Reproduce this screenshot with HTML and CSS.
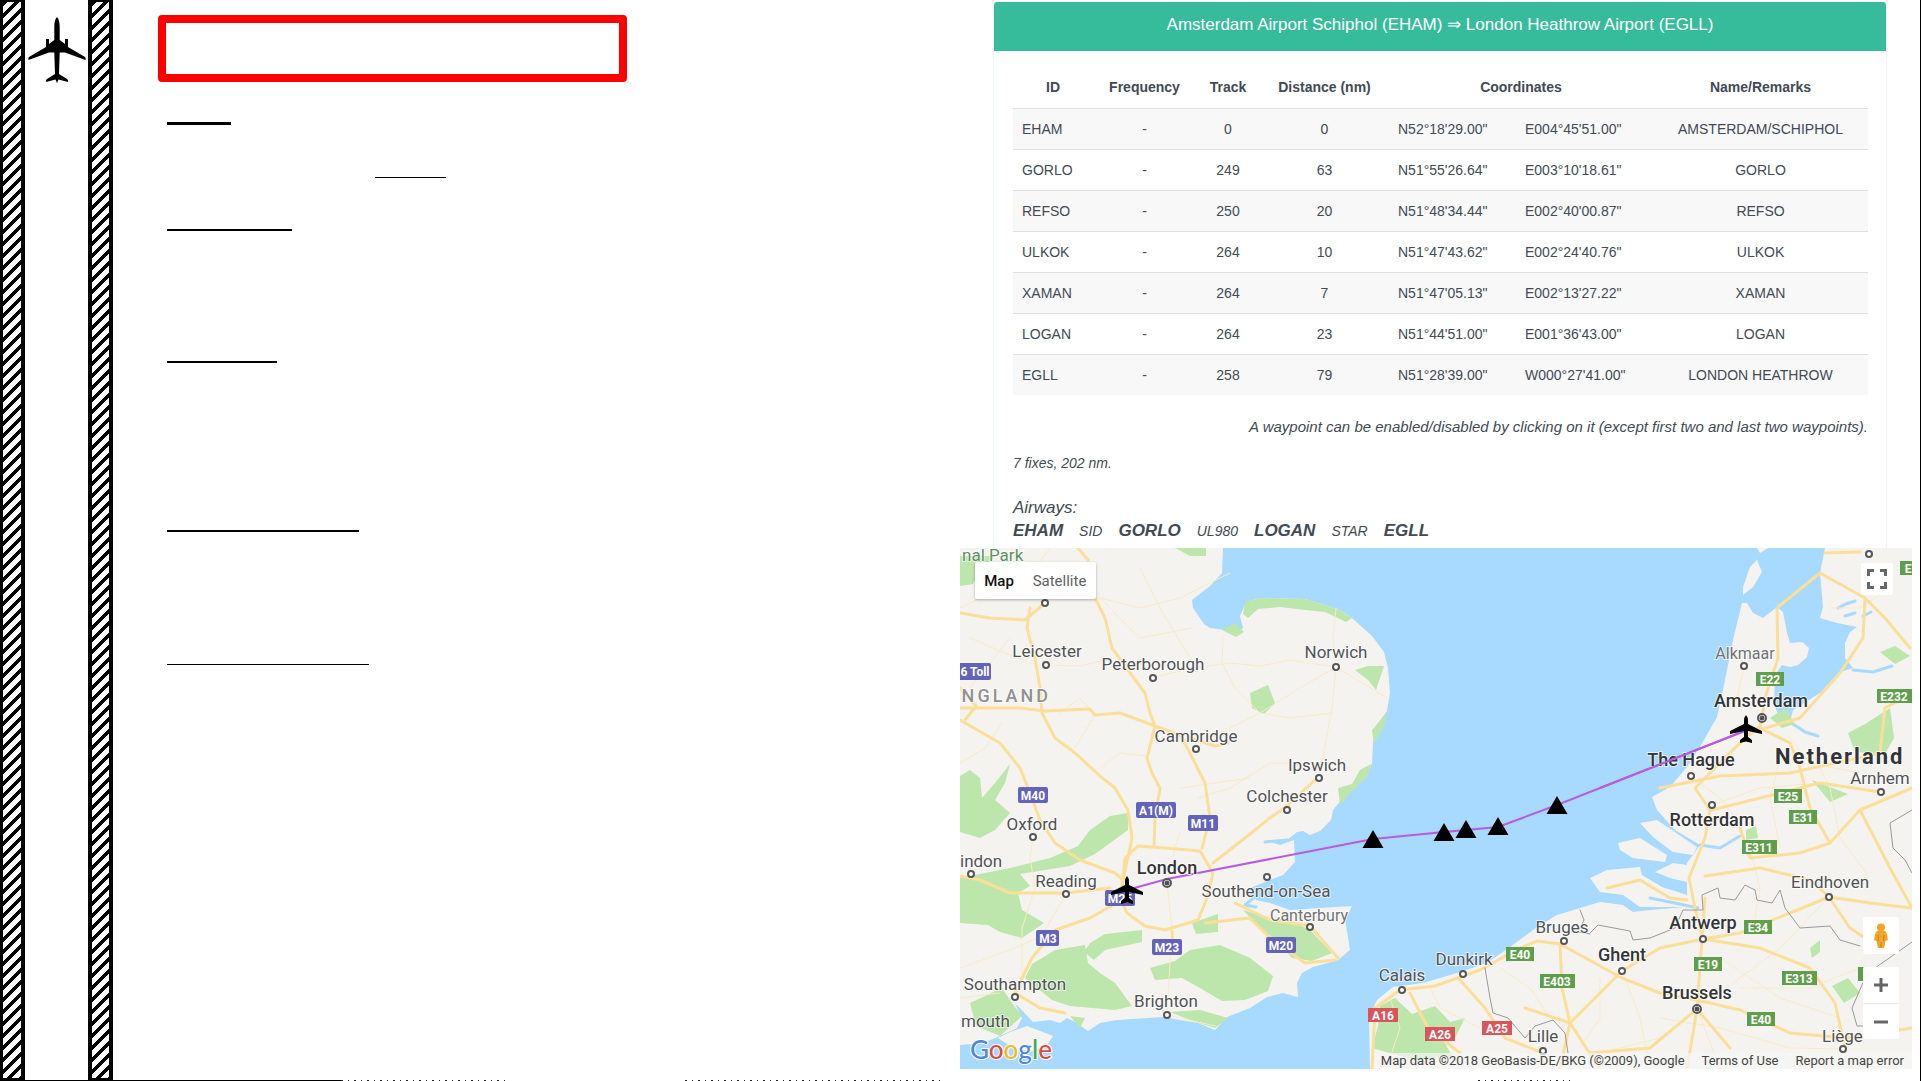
FILE: index.html
```html
<!DOCTYPE html>
<html lang="en">
<head>
<meta charset="utf-8">
<title>Amsterdam Airport Schiphol (EHAM) ⇒ London Heathrow Airport (EGLL)</title>
<link rel="stylesheet" href="styles.css">
</head>
<body>
<main class="page">
  <section class="plan">
    <div class="strip"></div>
    <div class="runway">
      <svg class="jet" viewBox="0 0 58 66" aria-hidden="true"><path d="M29 0C27 2 26.300 6 26.300 10V23L21 27V22H18V30L1 40Q0 41 .5 43L21 35.500H26.300L27 57L19 62Q17.500 63 18 65L27.500 62.500L29 66L30.500 62.500L40 65Q40.500 63 39 62L31 57L31.700 35.500H37L57.500 43Q58 41 57 40L40 30V22H37V27L31.700 23V10C31.700 6 31 2 29 0Z"/></svg>
    </div>
    <div class="strip strip-right"></div>
    <div class="notes">
      <div class="title-box"></div>
      <div class="rule rule-intro"></div>
      <div class="rule rule-inset"></div>
      <div class="rule rule-second"></div>
      <div class="rule rule-third"></div>
      <div class="rule rule-fourth"></div>
      <div class="rule rule-fifth"></div>
    </div>
  </section>

  <section class="route">
    <article class="card">
      <h1 class="card-title">Amsterdam Airport Schiphol (EHAM) ⇒ London Heathrow Airport (EGLL)</h1>
      <div class="card-body">
        <table class="fixes">
          <colgroup><col class="c-id"><col class="c-freq"><col class="c-track"><col class="c-dist"><col class="c-lat"><col class="c-lon"><col class="c-name"></colgroup>
          <thead><tr><th>ID</th><th>Frequency</th><th>Track</th><th>Distance (nm)</th><th colspan="2">Coordinates</th><th>Name/Remarks</th></tr></thead>
          <tbody>
            <tr><td class="left">EHAM</td><td>-</td><td>0</td><td>0</td><td class="left">N52°18'29.00"</td><td class="left">E004°45'51.00"</td><td>AMSTERDAM/SCHIPHOL</td></tr>
            <tr><td class="left">GORLO</td><td>-</td><td>249</td><td>63</td><td class="left">N51°55'26.64"</td><td class="left">E003°10'18.61"</td><td>GORLO</td></tr>
            <tr><td class="left">REFSO</td><td>-</td><td>250</td><td>20</td><td class="left">N51°48'34.44"</td><td class="left">E002°40'00.87"</td><td>REFSO</td></tr>
            <tr><td class="left">ULKOK</td><td>-</td><td>264</td><td>10</td><td class="left">N51°47'43.62"</td><td class="left">E002°24'40.76"</td><td>ULKOK</td></tr>
            <tr><td class="left">XAMAN</td><td>-</td><td>264</td><td>7</td><td class="left">N51°47'05.13"</td><td class="left">E002°13'27.22"</td><td>XAMAN</td></tr>
            <tr><td class="left">LOGAN</td><td>-</td><td>264</td><td>23</td><td class="left">N51°44'51.00"</td><td class="left">E001°36'43.00"</td><td>LOGAN</td></tr>
            <tr><td class="left">EGLL</td><td>-</td><td>258</td><td>79</td><td class="left">N51°28'39.00"</td><td class="left">W000°27'41.00"</td><td>LONDON HEATHROW</td></tr>
          </tbody>
        </table>
        <p class="hint">A waypoint can be enabled/disabled by clicking on it (except first two and last two waypoints).</p>
        <p class="summary">7 fixes, 202 nm.</p>
        <p class="airways-label">Airways:</p>
        <p class="airways"><b>EHAM</b><span>SID</span><b>GORLO</b><span>UL980</span><b>LOGAN</b><span>STAR</span><b>EGLL</b></p>
      </div>
    </article>

    <div class="map">
      <svg class="map-canvas" viewBox="0 0 952 521" role="img" aria-label="Route map">
        <defs>
          <path id="plane" d="M0-14Q-2-12-2-8V-5L-16 2V5L-2 2V8L-6 11V14L0 12.500L6 14V11L2 8V2L16 5V2L2-5V-8Q2-12 0-14Z"/>
          <path id="fix" d="M0-9L10.500 9H-10.500Z"/>
          <circle id="town" r="3"/>
          <g id="capital"><circle r="4"/><circle r="1.500" class="core"/></g>
        </defs>
        <rect class="sea" width="952" height="521"/>
        <g class="land">
          <path d="M0 0H263L262 25L250 38L232 52L233 60L244 76L250 80L265 82L275 88L283 80L280 68L286 54L300 50L345 51L365 57L380 62L392 70L412 88L424 104L428 120L430 145L427 163L415 180L413 195L412 215L408 225L395 235L383 250L373 262L371 272L360 283L350 287L343 283L337 284L327 292L310 294L320 297L334 292L335 314L323 327L310 332L290 340L296 352L310 355L330 362L360 360L392 358L385 372L388 389L390 402L378 412L353 419L342 425L337 435L338 449L323 445L307 449L290 460L267 469L255 482L238 475L203 469L157 472L140 475L128 483L117 475L107 470L100 475L90 472L73 474L55 455L62 470L57 480L40 488L23 495L0 497Z"/>
          <path d="M38 490L50 484L67 478L80 483L93 488L87 497L70 504L50 498Z"/>
          <path d="M410 521L409 469L417 452L433 439L463 435L497 425L527 415L550 399L577 379L597 367L620 360L640 354L663 357L673 364L690 362L713 360L723 359L727 347L727 315L733 307L740 297L715 282L697 262L692 249L710 239L727 219L740 199L757 169L763 142L773 92L782 55L787 55L793 65L803 70L817 59L823 64L827 85L830 95L842 94L849 100L847 109L838 117L830 119L822 117L815 127L814 155L820 172L830 174L833 162L860 145L880 124L893 120L885 110L885 95L890 84L897 79L877 75L860 70L863 59L860 25L865 0H952V521Z"/>
          <path d="M797 12L802 24L793 39L783 47L783 39L790 19ZM797 0H808L800 5Z"/>
          <path d="M630 330L647 322L680 319L682 327L702 339L727 347V359H680L663 347L640 344ZM658 295L680 290L707 307L705 314L673 310L660 302ZM680 275L697 272L737 299L733 307L713 304L693 289ZM695 324L713 315L727 317V334L710 330Z"/>
        </g>
        <g class="water">
          <path d="M893 122L913 124L932 118M878 60L886 56L895 53M885 68L895 65M903 68L911 64"/>
          <path d="M740 297L760 300L780 288M830 174L845 184L858 188"/>
          <path d="M690 350L715 355L738 360"/>
          <path d="M300 345L285 357L296 359M290 348L305 340M305 294L327 292"/>
        </g>
        <g class="green">
          <path d="M0 8L35 8L20 22L13 36L0 38ZM215 0H246V8L230 8Z"/>
          <path d="M0 228L10 222L20 230L22 250L35 235L50 216L45 235L35 252L50 265L35 282L20 290L0 284Z"/>
          <path d="M0 330L50 320L90 310L118 298L130 282L150 268L168 265L168 282L150 295L135 306L110 318L60 326L70 338L58 345L62 362L84 375L62 390L40 384L28 377L0 375Z"/>
          <path d="M65 430L72 416L95 402L125 397L128 415L140 425L155 435L172 458L155 462L110 458L92 452ZM130 395L145 386L182 382L182 394L145 402L134 412L124 404Z"/>
          <path d="M190 420L215 413L230 402L260 397L290 410L313 428L308 443L285 452L262 453L240 440L222 430L195 432ZM232 375L258 366L258 384L236 386ZM210 464L240 462L268 470L255 480L235 474Z"/>
          <path d="M283 362L310 370L330 372L350 382L372 405L352 413L332 410L318 394L300 380ZM10 455L42 440L52 455L62 468L40 488L16 478ZM110 468L125 470L120 480Z"/>
          <path d="M283 66L285 54L300 50L345 51L365 57L380 62L392 70L386 74L365 64L345 62L320 59L298 61L288 70ZM262 82L275 75L284 84L276 89ZM412 182L427 164L424 178L414 196ZM378 240L392 236L400 222L411 216L408 228L390 245L380 257ZM290 145L308 137L315 155L304 166L292 160ZM408 118L424 118L416 142L408 132L395 122Z"/>
          <path d="M418 478L420 458L435 450L452 466L475 458L490 474L505 470L495 490L480 486L492 508L455 512L412 500Z"/>
          <path d="M888 185L905 176L930 160L934 190L925 206L895 204ZM920 104L935 98L950 108L935 116ZM852 232L888 246L870 254ZM850 400L860 392L860 404L852 410ZM786 282L796 278L798 290L786 292ZM872 438L888 430L900 445L884 455ZM810 170L825 160L835 176L822 180Z"/>
        </g>
        <g class="lane">
          <path d="M0 60L40 40L75 20L90 0M85 117L120 118L155 110M80 118L45 105L10 90M193 130L230 120L270 115L300 118L330 112L376 119L427 150M376 119L373 90L376 60M376 119L340 140L300 165L250 190L236 201M376 119L372 160L359 230M263 90L262 115L275 140L300 165L330 170L372 165M270 25L220 50L180 60L140 50M140 50L180 90L232 80M100 165L120 150L135 167L115 200M0 215L25 200L42 175M73 289L70 310L75 340L62 380L62 430M140 220L160 205L185 208M106 346L85 382M207 335L215 300L220 285M207 335L212 380L207 467M207 467L255 478M238 250L270 240L310 215L359 215M0 420L55 400L100 380M0 450L40 445M180 20L200 60L230 110M10 140L50 90M220 240L255 235L290 230"/>
          <path d="M540 420L570 440L590 470M430 450L440 480L430 510M470 440L480 460L520 480M640 430L640 470L620 500M662 423L680 470L690 521M700 470L760 480L830 500L883 501M737 461L780 430L820 400L869 349M737 461L760 520M780 440L850 440L900 420M640 505L700 490L737 461M752 257L800 240L860 235M731 228L760 250L780 275M784 118L775 160M850 200L870 240L880 290M880 290L910 330M790 300L800 340L795 370M870 60L900 60L930 40M830 190L850 215L900 225M760 410L820 450L880 470M820 210L810 250L820 300"/>
        </g>
        <g class="road">
          <path d="M70 60L67 80L75 110L80 140L82 165L95 190L115 205L140 228L155 240L168 262L172 290L163 332M0 172L40 195L60 220L72 250L80 272L95 295L120 312L155 325L163 332M135 50L145 70L152 100L170 125L185 145L190 165L195 178L220 187L230 205L245 235L250 270L242 300M195 178L187 210L192 225L200 240L195 270L194 300M0 160L60 160L85 163L130 161L135 167L160 165L195 178M0 65L30 70L65 72L85 55M163 332L165 310L178 298L205 300L240 303L253 325L247 350L238 372L205 382L185 378L167 365L160 350L163 332M0 328L20 332L50 345L106 345L150 340M165 350L130 370L95 382L72 410L62 430L55 445L80 460L105 465M245 375L290 370L310 390L345 415L375 412M275 355L310 372L350 378L378 410M253 315L285 290L310 270L327 258L355 232M212 382L213 405M230 190L255 198L268 195M118 0L128 12M5 172L16 158L0 140"/>
          <path d="M412 521L415 460L440 442L475 438L520 422L560 400L577 393L600 396L640 418L662 430L700 445L737 452L780 462L830 485L885 490L952 480M450 445L468 480L500 505M500 432L525 460L545 490L583 505M565 460L610 475L600 521M600 395L602 440L610 475L640 445L662 423L700 400L743 391M610 475L640 521M743 391L735 360L729 330L745 290L750 262L735 240L760 215L785 190L800 178M743 391L800 400L850 420L875 455L885 500M743 391L780 385L830 365L869 349L910 355L952 360M745 350L742 391L737 461L727 521M737 461L770 500M737 461L690 500L630 505M745 328L800 320L850 332L869 349M780 280L790 310L840 305L870 295L900 262L952 240M817 60L818 110L805 150L800 180M817 60L860 25L905 50L903 90L880 125L840 170L805 180M905 50L925 70L950 100M700 240L760 228L830 225L920 205L925 160L952 145M900 262L930 320L952 360M800 180L830 195L840 220L850 260L870 295M869 349L890 380L920 400M647 340L680 332L710 350L727 352M865 5L900 4M752 262L800 250L860 235L921 244"/>
        </g>
        <g class="border">
          <path d="M525 420L530 450L533 465L548 470L565 490L575 478L593 472L605 485L608 505M630 385L638 377L670 383L673 392L690 390L715 380L723 362L743 362L742 347L758 340L760 350L775 352L785 337L795 342L797 352L812 355L820 342L825 360L840 380L870 378L880 392L900 398M952 262L930 275L933 300L945 312L952 325M952 394L915 420L905 430L892 460L897 478H904M620 362L624 372L618 384L630 386"/>
        </g>

        <path class="track" d="M167 342L207 331L413 291L484 284L506 282L538 279L597 257L787 182"/>

        <g class="towns">
          <use href="#town" x="85" y="55"/><use href="#town" x="86" y="117"/><use href="#town" x="193" y="130"/><use href="#town" x="236" y="201"/><use href="#town" x="376" y="119"/><use href="#town" x="359" y="230"/><use href="#town" x="327" y="262"/><use href="#town" x="73" y="289"/><use href="#town" x="11" y="326"/><use href="#town" x="106" y="346"/><use href="#town" x="307" y="329"/><use href="#town" x="350" y="379"/><use href="#town" x="55" y="449"/><use href="#town" x="207" y="467"/><use href="#town" x="442" y="442"/><use href="#town" x="503" y="426"/><use href="#town" x="604" y="393"/><use href="#town" x="583" y="503"/><use href="#town" x="784" y="118"/><use href="#town" x="909" y="6"/><use href="#town" x="731" y="228"/><use href="#town" x="921" y="244"/><use href="#town" x="752" y="257"/><use href="#town" x="869" y="349"/><use href="#town" x="743" y="391"/><use href="#town" x="662" y="423"/><use href="#town" x="883" y="501"/>
          <use href="#capital" x="207" y="335"/><use href="#capital" x="802" y="170"/><use href="#capital" x="737" y="461"/>
        </g>

        <g class="shield motorway">
          <rect x="-9" y="115" width="40" height="17" rx="2"/><text x="15" y="128">6 Toll</text>
          <rect x="58" y="239" width="30" height="16" rx="2"/><text x="73" y="252">M40</text>
          <rect x="176" y="254" width="40" height="16" rx="2"/><text x="196" y="267">A1(M)</text>
          <rect x="228" y="267" width="30" height="16" rx="2"/><text x="243" y="280">M11</text>
          <rect x="145" y="342" width="30" height="16" rx="2"/><text x="160" y="355">M25</text>
          <rect x="76" y="382" width="23" height="16" rx="2"/><text x="88" y="395">M3</text>
          <rect x="192" y="391" width="30" height="16" rx="2"/><text x="207" y="404">M23</text>
          <rect x="306" y="389" width="30" height="16" rx="2"/><text x="321" y="402">M20</text>
        </g>
        <g class="shield euro">
          <rect x="546" y="399" width="28" height="14"/><text x="560" y="411">E40</text>
          <rect x="580" y="426" width="35" height="14"/><text x="597" y="438">E403</text>
          <rect x="796" y="124" width="28" height="14"/><text x="810" y="136">E22</text>
          <rect x="917" y="141" width="35" height="14"/><text x="934" y="153">E232</text>
          <rect x="940" y="13" width="28" height="14"/><text x="948" y="25">E</text>
          <rect x="814" y="241" width="28" height="14"/><text x="828" y="253">E25</text>
          <rect x="829" y="262" width="28" height="14"/><text x="843" y="274">E31</text>
          <rect x="782" y="292" width="35" height="14"/><text x="799" y="304">E311</text>
          <rect x="784" y="372" width="28" height="14"/><text x="798" y="384">E34</text>
          <rect x="734" y="409" width="28" height="14"/><text x="748" y="421">E19</text>
          <rect x="822" y="423" width="35" height="14"/><text x="839" y="435">E313</text>
          <rect x="787" y="464" width="28" height="14"/><text x="801" y="476">E40</text>
          <rect x="898" y="419" width="10" height="14"/>
        </g>
        <g class="shield auto">
          <rect x="408" y="460" width="30" height="14"/><text x="423" y="472">A16</text>
          <rect x="465" y="479" width="30" height="14"/><text x="480" y="491">A26</text>
          <rect x="522" y="473" width="30" height="14"/><text x="537" y="485">A25</text>
        </g>

        <g class="label">
          <text class="park" x="2" y="13">nal Park</text>
          <text class="region" x="91" y="154">NGLAND</text>
          <text x="87" y="109">Leicester</text>
          <text x="193" y="122">Peterborough</text>
          <text x="236" y="194">Cambridge</text>
          <text x="376" y="110">Norwich</text>
          <text x="357" y="223">Ipswich</text>
          <text x="327" y="254">Colchester</text>
          <text x="72" y="282">Oxford</text>
          <text class="from" x="0" y="319">indon</text>
          <text x="106" y="339">Reading</text>
          <text x="306" y="349">Southend-on-Sea</text>
          <text class="small" x="349" y="373">Canterbury</text>
          <text x="55" y="442">Southampton</text>
          <text class="from" x="1" y="479">mouth</text>
          <text x="206" y="459">Brighton</text>
          <text x="442" y="433">Calais</text>
          <text x="504" y="417">Dunkirk</text>
          <text x="602" y="385">Bruges</text>
          <text x="583" y="494">Lille</text>
          <text class="small" x="785" y="111">Alkmaar</text>
          <text x="920" y="236">Arnhem</text>
          <text x="870" y="340">Eindhoven</text>
          <text class="from" x="862" y="494">Liège</text>
          <text class="major" x="207" y="326">London</text>
          <text class="major" x="801" y="159">Amsterdam</text>
          <text class="major" x="731" y="218">The Hague</text>
          <text class="major" x="752" y="278">Rotterdam</text>
          <text class="major" x="743" y="381">Antwerp</text>
          <text class="major" x="662" y="413">Ghent</text>
          <text class="major" x="737" y="451">Brussels</text>
          <text class="country" x="815" y="216">Netherland</text>
        </g>

        <path class="track" d="M640 240L787 182"/>
        <g class="markers">
          <use href="#plane" x="167" y="342"/><use href="#plane" x="786" y="181"/>
          <use href="#fix" x="413" y="291"/><use href="#fix" x="484" y="284"/><use href="#fix" x="506" y="281"/><use href="#fix" x="538" y="278"/><use href="#fix" x="597" y="257"/>
        </g>
        <text class="logo" x="10" y="511"><tspan class="blue">G</tspan><tspan class="red">o</tspan><tspan class="yellow">o</tspan><tspan class="blue">g</tspan><tspan class="lime">l</tspan><tspan class="red">e</tspan></text>
      </svg>

      <div class="map-type">
        <button type="button" class="active">Map</button>
        <button type="button">Satellite</button>
      </div>
      <button type="button" class="control fullscreen" aria-label="Toggle fullscreen">
        <svg viewBox="0 0 20 20" width="20" height="20"><path d="M1.500 7V1.500H7M13 1.500H18.500V7M18.500 13V18.500H13M7 18.500H1.500V13"/></svg>
      </button>
      <div class="map-tools">
        <button type="button" class="control pegman" aria-label="Street View">
          <svg viewBox="0 0 16 26" width="16" height="26"><circle cx="8" cy="4.500" r="4"/><path d="M4 8H12Q14 9 15 17L12.500 18L11 25H5L3.500 18L1 17Q2 9 4 8Z"/><path class="fold" d="M5 12L5.500 18M11 12L10.500 18M8 19V24"/></svg>
        </button>
        <div class="zoom">
          <button type="button" class="control" aria-label="Zoom in"><svg viewBox="0 0 14 14" width="14" height="14"><path d="M7 0V14M0 7H14"/></svg></button>
          <button type="button" class="control" aria-label="Zoom out"><svg viewBox="0 0 14 14" width="14" height="14"><path d="M0 7H14"/></svg></button>
        </div>
      </div>
      <div class="credits">
        <span>Map data ©2018 GeoBasis-DE/BKG (©2009), Google</span>
        <a href="#terms">Terms of Use</a>
        <a href="#report">Report a map error</a>
      </div>
    </div>
  </section>
</main>
<div class="page-edge"><i class="edge-line"></i><i class="ticks ticks-a"></i><i class="ticks ticks-b"></i><i class="ticks ticks-c"></i></div>
</body>
</html>
```
FILE: styles.css
```css
* { box-sizing: border-box; }

body {
  margin: 0;
  min-height: 100vh;
  display: flex;
  flex-direction: column;
  background: #fff;
  color: #434a54;
  font-family: "Liberation Sans", Arial, sans-serif;
  font-size: 14px;
  border-right: 1px solid #000;
}

h1, p { margin: 0; font-weight: normal; }
button { margin: 0; padding: 0; border: 0; background: #fff; font: inherit; cursor: pointer; }

.page { flex: 1; display: grid; grid-template-columns: 1fr 1fr; }

/* Left half: runway strips and outline notes */
.plan { display: flex; }
.strip {
  flex: none;
  width: 25px;
  border: solid #000;
  border-width: 2px 4px 2px 3px;
  background: linear-gradient(135deg, #000 18%, #fff 18% 50%, #000 50% 68%, #fff 68%) 0 0 / 12px 12px;
}
.strip-right { border-left-width: 4px; }
.runway { flex: none; width: 63px; padding-top: 17px; text-align: center; }
.jet { width: 58px; height: 66px; fill: #000; }

.notes { flex: 1; min-width: 0; padding: 15px 0 0 45px; }
.title-box { width: 469px; max-width: 100%; height: 67px; border: 8px solid #fe0000; border-radius: 4px; }
.rule { height: 2px; margin-left: 9px; background: #000; }
.rule-intro { width: 64px; height: 3px; margin-top: 40px; }
.rule-inset { width: 71px; height: 1px; margin-top: 52px; margin-left: 217px; }
.rule-second { width: 125px; margin-top: 51px; }
.rule-third { width: 110px; margin-top: 130px; }
.rule-fourth { width: 192px; margin-top: 167px; }
.rule-fifth { width: 202px; height: 1px; margin-top: 132px; }

/* Right half: flight plan card */
.route { min-width: 0; padding-top: 2px; }
.card {
  height: 546px;
  margin: 0 33px 0 33px;
  border: 1px solid #f1f2f4;
  border-width: 0 1px;
  border-radius: 4px 4px 0 0;
  overflow: hidden;
}
.card-title {
  height: 49px;
  padding-top: 12px;
  background: #37bc9b;
  color: #fff;
  font-size: 17px;
  line-height: 22px;
  text-align: center;
}
.card-body { padding: 16px 18px 0 19px; }

.fixes { width: 100%; table-layout: fixed; border-collapse: collapse; }
.c-id { width: 80px; }
.c-freq { width: 103px; }
.c-track { width: 64px; }
.c-dist { width: 129px; }
.c-lat { width: 127px; }
.c-lon { width: 137px; }
.c-name { width: 215px; }
.fixes th, .fixes td { height: 41px; padding: 0; text-align: center; line-height: 20px; white-space: nowrap; }
.fixes td { border-top: 1px solid #dfe1e3; }
.fixes tbody tr:nth-child(odd) { background: #f8f8f9; }
.fixes .left { padding-left: 9px; text-align: left; }

.hint, .summary, .airways-label, .airways { font-style: italic; line-height: 20px; }
.hint { margin-top: 22px; font-size: 15px; text-align: right; }
.summary { margin-top: 16px; }
.airways-label { margin-top: 25px; font-size: 17px; }
.airways { display: flex; align-items: baseline; gap: 16px; margin-top: 3px; }
.airways b { font-size: 17px; }

/* Map */
.map { position: relative; margin-right: 8px; overflow: hidden; font-family: Roboto, sans-serif; }
.map-canvas { display: block; width: 100%; height: auto; }
.sea { fill: #a8daff; }
.land { fill: #f5f3ef; }
.green { fill: #bce6ac; }
.water, .lane, .road, .border, .track { fill: none; stroke-linejoin: round; stroke-linecap: round; }
.water { stroke: #a8daff; stroke-width: 3; }
.lane { stroke: #f8ebc6; stroke-width: 1; }
.road { stroke: #fbdf98; stroke-width: 3; }
.border { stroke: #9a9a9c; stroke-width: 1; }
.track { stroke: #b95be0; stroke-width: 2; }
.towns { fill: #fff; stroke: #55565a; stroke-width: 2; }
.core { fill: #222; }
.shield text { fill: #fff; font-size: 12px; font-weight: 700; text-anchor: middle; }
.motorway rect { fill: #6463bb; }
.euro rect { fill: #5f9f4c; }
.auto rect { fill: #d9555a; }
.label text {
  fill: #505256;
  stroke: #fff;
  stroke-opacity: .7;
  stroke-width: 2px;
  paint-order: stroke;
  font-size: 17px;
  text-anchor: middle;
}
.label .small { font-size: 16px; fill: #707276; }
.label .major { font-size: 18px; font-weight: 500; fill: #333437; }
.label .from { text-anchor: start; }
.label .park { text-anchor: start; fill: #5c9262; }
.label .region { text-anchor: end; letter-spacing: 3px; font-size: 18px; font-weight: 500; fill: #919194; }
.label .country { text-anchor: start; letter-spacing: 2px; font-size: 22px; font-weight: 700; fill: #333437; }
.markers { fill: #000; }
.logo { font: 500 26px Lato, sans-serif; stroke: #fff; stroke-width: 2px; paint-order: stroke; }
.blue { fill: #4c86e6; }
.red { fill: #e04a3f; }
.yellow { fill: #f2b81c; }
.lime { fill: #3fa65a; }

.map-type {
  position: absolute;
  top: 14px;
  left: 15px;
  display: flex;
  height: 37px;
  border-radius: 2px;
  overflow: hidden;
  box-shadow: 0 1px 3px rgba(0, 0, 0, .3);
}
.map-type button { width: 73px; color: #626262; font-size: 15px; }
.map-type .active { width: 48px; color: #111; font-weight: 500; }

.control { display: flex; align-items: center; justify-content: center; width: 36px; height: 37px; border-radius: 2px; }
.control path { fill: none; stroke: #666; stroke-width: 3; }
.fullscreen { position: absolute; top: 15px; right: 19px; width: 32px; height: 32px; }
.map-tools { position: absolute; right: 13px; bottom: 30px; display: flex; flex-direction: column; gap: 13px; }
.pegman circle, .pegman path { fill: #f2a526; stroke: none; }
.pegman .fold { fill: none; stroke: #c97c1c; stroke-width: 1; }
.zoom { background: #fff; border-radius: 2px; }
.zoom .control { height: 36px; }
.zoom .control + .control { border-top: 1px solid #e6e6e6; }

.credits {
  position: absolute;
  right: 0;
  bottom: 0;
  display: flex;
  gap: 17px;
  padding: 0 8px 0 6px;
  background: rgba(245, 245, 245, .7);
  color: #444;
  font-size: 13px;
  line-height: 16px;
  white-space: nowrap;
}
.credits a { color: inherit; text-decoration: none; }

/* Cut-off line along the bottom of the page */
.page-edge { display: flex; height: 1px; }
.edge-line { width: 341px; background: #000; }
.ticks { background: repeating-linear-gradient(90deg, #222 0 2px, #fff 2px 7px, #222 7px 8px, #fff 8px 13px); }
.ticks-a { width: 164px; }
.ticks-b { width: 258px; margin-left: 180px; }
.ticks-c { width: 92px; margin-left: 535px; }
```
